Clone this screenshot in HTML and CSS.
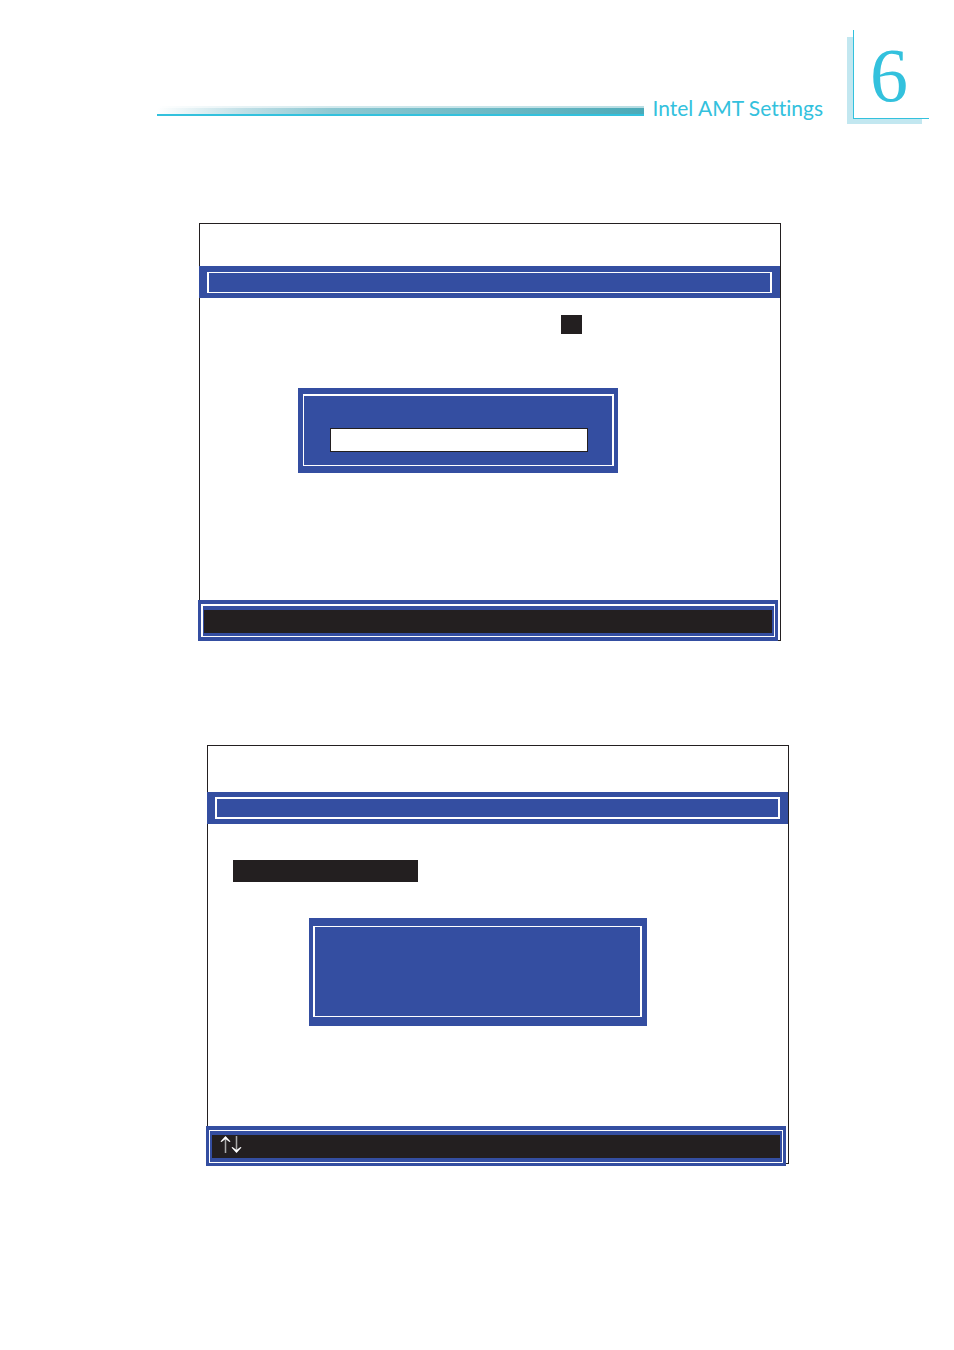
FILE: index.html
```
<!DOCTYPE html>
<html lang="en">
<head>
  <meta charset="UTF-8">
  <title>Intel AMT Settings</title>
  <link rel="stylesheet" href="styles.css">
</head>
<body>
  <!-- chapter header -->
  <header class="header">
    <div class="rule"></div>
    <h1>Intel AMT Settings</h1>
    <div class="chapter"><span>6</span></div>
  </header>

  <main>
    <!-- input screen -->
    <section class="screen">
      <div class="bar"><div class="bar-line"></div></div>
      <div class="body">
        <div class="cursor"></div>
        <div class="dialog">
          <div class="dialog-line">
            <input type="text" aria-label="Value">
          </div>
        </div>
      </div>
      <div class="keys"><div class="keys-line"><div class="keys-text"></div></div></div>
    </section>

    <!-- menu screen -->
    <section class="screen menu">
      <div class="bar"><div class="bar-line"></div></div>
      <div class="body">
        <div class="selected"></div>
        <div class="dialog">
          <div class="dialog-line"></div>
        </div>
      </div>
      <div class="keys"><div class="keys-line"><div class="keys-text">
        <svg width="22" height="17" viewBox="0 0 22 17" role="img" aria-label="Up and down keys">
          <path d="M5.500 1v16M16.500 0v16" stroke="#aaa" stroke-width="1.500" fill="none"/>
          <path d="M5.500 0L10.500 5.500 9.500 6 5.500 3 1.500 6 .5 5.500zM16.500 17L11.500 11.500l1-.5 4 3 4-3 1 .5z" fill="#fff"/>
        </svg>
      </div></div></div>
    </section>
  </main>
</body>
</html>
```
FILE: styles.css
```
* { box-sizing:border-box; }
body { margin:0; background:#fff; font-family:Lato, "Liberation Sans", sans-serif; }

.header { display:flex; align-items:flex-end; padding:30px 25px 0 157px; color:#33c1dd; }
.rule { flex:1; height:10px; margin-bottom:8px; border-bottom:2px solid #33c1dd; background:linear-gradient(#ffffff99 0 2px, #ffffff00 2px), linear-gradient(90deg, #fff, #c0dfe6 18%, #8ec8d2 36%, #4baab8) border-box; }
h1 { margin:0 24px 0 8px; font-size:21px; line-height:32px; font-weight:normal; font-variant-ligatures:none; white-space:nowrap; }
.chapter { position:relative; padding:0 0 5px 6px; }
.chapter::before { content:""; position:absolute; left:0; top:7px; bottom:0; width:75px; background:#c2e7f0; }
.chapter span { position:relative; display:block; width:76px; height:89px; border-left:1px solid #33c1dd; border-bottom:1px solid #33c1dd; background:#fff; font-family:"Liberation Serif", serif; font-size:76px; line-height:90px; text-indent:16px; }

main { padding:99px 173px 184px 199px; }
.screen { display:flex; flex-direction:column; height:418px; padding-top:42px; border:1px solid #231f20; }
.bar { height:32px; margin-left:-1px; padding:6px 8px 5px; background:#344ea1; }
.bar-line { height:100%; border:solid #fff; border-width:1px 2px; }
.body { flex:1; }
.cursor { width:21px; height:19px; margin:17px 0 0 361px; background:#231f20; }
.dialog { width:320px; height:85px; margin:54px 0 0 98px; padding:6px 4px 7px 5px; background:#344ea1; }
.dialog-line { height:100%; padding:32px 24px 0 26px; border:solid #fff; border-width:2px 2px 1px 1px; }
.dialog input { display:block; width:100%; height:24px; padding:0 6px; border:1px solid #231f20; border-radius:0; background:#fff; font:14px "Liberation Sans", sans-serif; }
.keys { margin:0 2px -1px -2px; padding:4px 3px; background:#344ea1; }
.keys-line { border:solid #fff; border-width:2px 1px 1px 2px; background:#344ea1; padding:4px 2px 3px 1px; }
.keys-text { height:23px; background:#231f20; }

/* second screen */
.menu { height:419px; margin:104px -8px 0 8px; padding-top:46px; }
.menu .bar { padding:5px 8px; }
.menu .bar-line { border-width:2px; }
.selected { width:185px; height:22px; margin:36px 0 0 25px; background:#231f20; }
.menu .dialog { width:338px; height:108px; margin:36px 0 0 101px; padding:8px 5px 9px 4px; }
.menu .dialog-line { border-width:1px 2px; }
.menu .keys { margin-bottom:-3px; padding:4px 3px 3px; }
.menu .keys-line { border-width:1px; padding:4px 2px; }
.menu .keys-text { padding:1px 0 0 8px; }
.menu svg { display:block; }
```
